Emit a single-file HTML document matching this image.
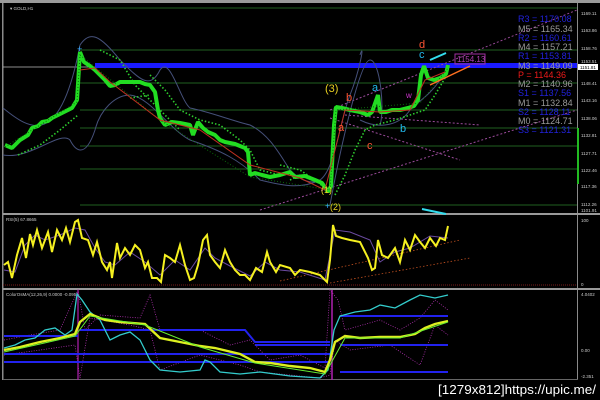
<!DOCTYPE html>
<html><head><meta charset="utf-8"><style>
html,body{margin:0;padding:0;background:#000;width:600px;height:400px;overflow:hidden}
svg{display:block}
text{font-family:"Liberation Sans",sans-serif}
</style></head><body>
<svg width="600" height="400" viewBox="0 0 600 400" xmlns="http://www.w3.org/2000/svg">
<rect width="600" height="400" fill="#000"/>
<rect x="0" y="0" width="600" height="3" fill="#9a9a9a"/>
<rect x="2" y="3" width="1.5" height="377" fill="#8a8a8a"/>
<rect x="577" y="3" width="1" height="377" fill="#8a8a8a"/>
<rect x="3" y="213" width="597" height="2" fill="#9a9a9a"/>
<rect x="3" y="288" width="597" height="2" fill="#9a9a9a"/>
<rect x="3" y="379" width="575" height="1" fill="#666"/>

<g stroke="#1f5f1f" stroke-width="1">
<line x1="80" y1="8" x2="577" y2="8"/>
<line x1="80" y1="50" x2="577" y2="50"/>
<line x1="80" y1="83" x2="577" y2="83"/>
<line x1="80" y1="110" x2="577" y2="110"/>
<line x1="80" y1="128" x2="577" y2="128"/>
<line x1="80" y1="146" x2="577" y2="146"/>
<line x1="80" y1="169" x2="577" y2="169"/>
<line x1="80" y1="205" x2="577" y2="205"/>
</g>
<line x1="3" y1="67" x2="577" y2="67" stroke="#bbb" stroke-width="0.8"/>
<rect x="95" y="63" width="482" height="5" fill="#1a1aff"/>

<g stroke="#9a4a9a" stroke-width="1" stroke-dasharray="2,2" fill="none">
<polyline points="330,110 577,10"/>
<polyline points="260,210 577,110"/>
<polyline points="330,118 460,160"/>
<polyline points="345,115 480,125"/>
</g>
<g stroke="#45507a" stroke-width="1" fill="none">
<path d="M3,108 C30,130 60,150 80,45 C90,30 100,35 120,60 C140,80 150,90 160,70 C170,55 180,100 190,108 C210,112 230,120 250,125 C270,135 280,155 290,170 C300,180 310,185 320,180"/>
<path d="M3,155 C30,160 60,130 70,140 C75,150 85,160 95,130 C100,110 115,95 130,95 C150,97 170,130 190,140 C220,150 240,160 260,180 C280,185 300,190 320,180 C335,170 340,120 350,95 C360,70 365,40 360,55"/>
<path d="M330,205 C340,150 360,60 370,60 C380,60 385,110 380,125"/>
<path d="M360,120 C380,130 400,125 410,110 C420,100 430,95 440,80"/>
</g>
<g stroke="#2ecc2e" stroke-width="1.6" stroke-dasharray="1.5,2" fill="none">
<polyline points="18,155 40,145 60,130 78,115"/>
<polyline points="100,50 120,60 135,85 150,100 165,115 180,130"/>
<polyline points="150,75 165,90 180,110 200,120 220,125 240,140 250,150 260,170 280,175"/>
<polyline points="130,98 150,95"/>
<polyline points="290,180 300,175"/>
<polyline points="335,195 345,175 355,150 365,130 375,125 395,120 410,115 425,110 435,95 445,78"/>
<polyline points="280,165 300,170 315,180 325,188"/>
</g>
<polyline fill="none" stroke="#22dd22" stroke-width="4" stroke-linejoin="bevel" points="5,145 12,148 20,140 28,135 32,128 38,126 42,122 48,121 52,118 58,115 62,113 68,110 72,108 77,100 80,52 84,62 90,66 95,70 100,75 105,80 110,86 115,85 120,82 130,82 140,82 145,84 150,85 155,92 158,110 160,118 165,125 172,122 180,123 190,125 193,135 198,122 203,128 208,132 215,135 220,140 225,142 235,144 245,148 248,152 250,175 255,173 262,175 270,177 280,175 290,172 295,177 305,176 315,180 322,183 328,192 331,186 334,125 336,107 342,108 350,110 360,112 368,115 372,112 378,95 380,112 386,112 392,110 400,110 408,108 414,106 418,100 421,75 424,66 428,78 434,80 440,78 446,74 448,65"/>
<polyline fill="none" stroke="#0a6a0a" stroke-width="1" stroke-dasharray="1,2" points="5,147 77,102 80,55 160,120 250,177 330,190 336,110 420,103 448,68"/>
<polyline fill="none" stroke="#c03020" stroke-width="1" points="80,70 95,68 110,82 160,120 200,130 250,165 300,178 325,190 335,150 345,110 380,112 410,110 425,80 445,72"/>
<line x1="430" y1="85" x2="470" y2="66" stroke="#ff7020" stroke-width="1.5"/>
<g font-size="11">
<text x="325" y="92" fill="#e8d020">(3)</text>
<text x="346" y="101" fill="#ff5533">b</text>
<text x="338" y="131" fill="#ff5533">a</text>
<text x="367" y="149" fill="#ff5533">c</text>
<text x="372" y="91" fill="#22bbee">a</text>
<text x="400" y="132" fill="#22bbee">b</text>
<text x="419" y="58" fill="#22bbee">c</text>
<text x="419" y="48" fill="#ff5533">d</text>
<text x="321" y="193" fill="#e8d020" font-size="9">(1)</text>
<text x="330" y="210" fill="#e8d020" font-size="9">(2)</text>
<text x="406" y="98" fill="#cc33cc" font-size="8">w</text>
</g>
<rect x="455" y="54" width="30" height="10" fill="none" stroke="#a030a0"/>
<text x="457" y="62" fill="#b040b0" font-size="8">1154.13</text>
<line x1="430" y1="60" x2="446" y2="53" stroke="#33ddee" stroke-width="2"/>
<line x1="422" y1="209" x2="446" y2="214" stroke="#33ddee" stroke-width="2"/>
<text x="77" y="52" fill="#33aaff" font-size="9">+</text>
<text x="325" y="209" fill="#33aaff" font-size="9">+</text>

<g font-size="9">
<text x="518" y="22" fill="#2222dd">R3 = 1170.08</text>
<text x="518" y="32" fill="#999">M5 = 1165.34</text>
<text x="518" y="41" fill="#2222dd">R2 = 1160.61</text>
<text x="518" y="50" fill="#999">M4 = 1157.21</text>
<text x="518" y="59" fill="#2222dd">R1 = 1153.81</text>
<text x="518" y="69" fill="#999">M3 = 1149.09</text>
<text x="518" y="78" fill="#ee1a1a">P  = 1144.36</text>
<text x="518" y="87" fill="#999">M2 = 1140.96</text>
<text x="518" y="96" fill="#2222dd">S1 = 1137.56</text>
<text x="518" y="106" fill="#999">M1 = 1132.84</text>
<text x="518" y="115" fill="#2222dd">S2 = 1128.11</text>
<text x="518" y="124" fill="#999">M0 = 1124.71</text>
<text x="518" y="133" fill="#2222dd">S3 = 1121.31</text>
</g>
<rect x="577" y="128" width="2" height="56" fill="#22bb22"/>
<g font-size="4.5" fill="#ccc">
<text x="581" y="15">1169.11</text><text x="581" y="32">1163.86</text><text x="581" y="50">1158.76</text>
<text x="581" y="63">1153.51</text><text x="581" y="85">1148.41</text><text x="581" y="102">1143.16</text>
<text x="581" y="120">1138.06</text><text x="581" y="137">1132.81</text><text x="581" y="155">1127.71</text>
<text x="581" y="172">1122.46</text><text x="581" y="188">1117.36</text><text x="581" y="206">1112.26</text>
<text x="581" y="212">1101.91</text><text x="581" y="222">100</text><text x="581" y="286">0</text>
<text x="581" y="296">4.0402</text><text x="581" y="352">0.00</text><text x="581" y="378">-2.351</text>
</g>
<rect x="578" y="64" width="20" height="6" fill="#fff"/>
<text x="580" y="69" font-size="4.5" fill="#000">1151.81</text>
<text x="10" y="10" font-size="4.5" fill="#ccc">▾ GOLD,H1</text>

<text x="6" y="221" font-size="4.5" fill="#ccc">RSI(5) 67.8665</text>
<line x1="3" y1="285" x2="577" y2="285" stroke="#7a1a1a" stroke-dasharray="1,1"/>
<g stroke="#c05020" stroke-dasharray="1.5,2" fill="none" stroke-width="0.8">
<line x1="280" y1="281" x2="460" y2="240"/><line x1="330" y1="283" x2="470" y2="258"/>
</g>
<polyline fill="none" stroke="#6a4aa0" stroke-width="1" points="4,270 15,272 25,245 35,235 45,240 60,235 75,228 85,230 95,248 105,262 115,265 130,252 145,262 160,275 175,260 190,270 205,248 215,258 230,266 250,276 265,262 280,270 300,272 325,280 335,230 350,232 370,240 380,262 395,252 410,248 430,236 448,238"/>
<polyline fill="none" stroke="#f5f020" stroke-width="2" points="4,265 8,262 12,278 17,255 22,238 26,258 30,234 33,245 37,230 42,248 48,232 52,252 57,230 62,240 66,228 70,242 75,222 78,220 82,238 88,240 93,255 97,242 102,262 107,270 110,262 112,278 117,243 120,258 125,248 130,255 135,245 140,250 145,268 148,262 152,278 157,278 161,282 165,255 170,258 175,262 180,245 185,265 190,280 194,278 198,265 203,240 207,235 210,255 215,262 220,268 225,250 230,262 235,270 240,275 245,275 250,280 256,268 262,272 267,252 270,262 276,272 280,265 290,268 295,275 300,270 310,272 320,275 327,282 330,260 333,225 336,236 342,238 350,240 360,242 368,258 372,270 375,268 378,240 382,255 388,258 395,248 400,262 405,240 410,250 415,235 420,242 425,248 430,238 436,246 440,238 445,240 448,226"/>

<text x="6" y="296" font-size="4.5" fill="#ccc">ColorOsMA(12,26,9) 0.0000 -0.0952</text>
<g stroke="#b030b0" stroke-width="0.8" stroke-dasharray="1,1.5" fill="none">
<polyline points="4,340 30,335 60,330 78,290 85,330 100,315 140,318 150,295 160,330 200,330 230,345 250,340 270,360 300,355 325,368 330,290 338,300 345,330 380,320 400,330 420,318 435,300 448,310"/>
<polyline points="4,355 40,350 75,345 80,378 90,318 130,325 150,330 160,370 200,355 240,365 260,372 320,378 330,375 335,340 350,350 390,345 420,365 435,325 448,335"/>
</g>
<line x1="78" y1="290" x2="78" y2="380" stroke="#b020b0" stroke-width="1.2"/>
<line x1="332" y1="290" x2="332" y2="380" stroke="#b020b0" stroke-width="1.5"/>
<g stroke="#2222ee" stroke-width="2" fill="none">
<polyline points="4,336 78,336"/><polyline points="4,354 330,354"/><polyline points="80,330 245,330 255,342 330,342"/>
<polyline points="4,362 145,362 330,362"/><polyline points="255,345 330,345"/>
<polyline points="340,316 448,316"/><polyline points="340,345 448,345"/><polyline points="340,372 448,372"/>
</g>
<polyline fill="none" stroke="#33cccc" stroke-width="1.3" points="4,348 15,345 25,340 35,338 45,330 55,328 65,335 72,330 77,294 82,300 90,312 100,320 110,340 120,335 130,332 140,340 150,360 160,370 180,372 200,370 205,360 210,362 220,372 240,374 260,372 290,376 320,378 328,370 334,330 340,316 355,312 370,310 380,305 395,308 410,300 420,295 435,298 448,295"/>
<polyline fill="none" stroke="#ddf020" stroke-width="2.4" points="4,350 20,347 40,342 60,338 75,334 80,322 90,314 105,320 120,322 145,324 160,338 180,342 200,346 215,348 240,354 255,362 270,363 290,366 310,368 325,372 330,360 335,342 345,336 360,338 380,337 400,337 415,334 425,328 435,324 448,321"/>
<polyline fill="none" stroke="#66ee33" stroke-width="1" points="4,352 40,344 75,336 90,316 145,325 200,347 255,363 325,374 345,338 400,338 448,322"/>

<text x="438" y="394" font-size="13" fill="#fff" textLength="158" lengthAdjust="spacingAndGlyphs" font-family="Liberation Sans Narrow, Liberation Sans, sans-serif">[1279x812]https://upic.me/</text>
</svg>
</body></html>
